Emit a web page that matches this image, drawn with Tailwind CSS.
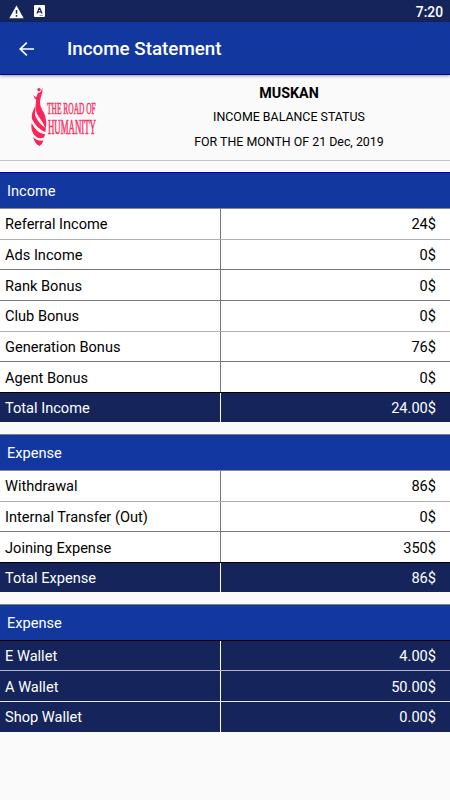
<!DOCTYPE html>
<html lang="en">
<head>
  <meta charset="UTF-8" />
  <meta name="viewport" content="width=device-width, initial-scale=1.0"/>
  <title>Income Statement</title>
  <script src="https://cdn.jsdelivr.net/npm/@tailwindcss/browser@4"></script>
</head>
<body class="bg-[#fafafa] h-[800px] overflow-hidden text-black font-[Roboto,sans-serif]">
  <!-- Status bar -->
  <div class="h-[22px] bg-[#15255b] flex items-center pl-[9px] pr-[7px] text-white">
    <svg class="w-[15px] h-[14px] mt-px" viewBox="0 0 15 14">
      <path d="M7.5 0.5L14.7 13.3H0.3Z" fill="#fff"/>
      <path d="M7.5 5V8.8M7.5 10V11.7" stroke="#15255b" stroke-width="1.5"/>
    </svg>
    <svg class="w-[11px] h-[12px] ml-[10px]" viewBox="0 0 11 12">
      <rect width="11" height="12" rx="1" fill="#fff"/>
      <path d="M3 8.5L5.2 3.2H5.8L8 8.5M3.8 6.9H7.2" fill="none" stroke="#15255b" stroke-width="1.2"/>
      <path d="M5.5 10.4H9" stroke="#15255b" stroke-width="0.5"/>
    </svg>
    <span class="ml-auto text-[13.8px] font-medium leading-[22px] pt-[1px]">7:20</span>
  </div>

  <!-- App bar -->
  <div class="h-[53px] bg-[#1238a0] border-b border-[#00009c] flex items-center shadow-[0_1px_3px_rgba(0,0,0,0.4)] relative text-white">
    <svg class="w-[15px] h-[14px] ml-[19px] mt-px" viewBox="0 0 15 14">
      <path d="M15 7H1.2M7.8 0.6L1.2 7L7.8 13.4" fill="none" stroke="#fff" stroke-width="1.7"/>
    </svg>
    <h1 class="ml-[33px] text-[18.8px] font-medium pt-[2px]">Income Statement</h1>
  </div>

  <!-- Company and month -->
  <div class="h-[86px] flex border-b border-[#c4c4c4]">
    <div class="w-[128px] pl-[30px] pt-[11px]">
      <svg class="w-[80px] h-[64px] overflow-visible" viewBox="0 0 80 64">
        <circle cx="9" cy="3.6" r="1.7" fill="#fb2358"/>
        <path d="M3.3 9L6 11.5L8 7L10.4 6.2L12.5 1.8L12.3 6.5Q10.5 11 10 16Q10 21 14 27Q17.5 35 15.6 43Q13 36 9 31Q4 25 6.2 14Q4 12 3.3 9Z" fill="#fb2358"/>
        <path d="M5.4 20Q1 27 2 33Q7 43 15.3 46Q16.5 43 15.3 42Q8 37 5 29Z" fill="#fb2358"/>
        <path d="M1.7 37Q0.5 43 3.5 48Q8 54 14 51.5L15.2 48.5Q6 47 1.7 37Z" fill="#fb2358"/>
        <path d="M3 51Q5 58 9.5 60Q12.5 58.5 13.4 54.5Q7 55.5 3 51Z" fill="#fb2358"/>
        <text transform="translate(17 27.8) scale(0.425 1)" font-family="Liberation Serif, serif" font-size="17.5" fill="#f73365" stroke="#f73365" stroke-width="0.6">THE ROAD OF</text>
        <text transform="translate(18 48) scale(0.41 1)" font-family="Liberation Serif, serif" font-size="21.5" fill="#f73365" stroke="#f73365" stroke-width="0.7">HUMANITY</text>
      </svg>
    </div>
    <div class="flex-1 text-center pt-[6px]">
      <p class="text-[14.3px] font-bold leading-6">MUSKAN</p>
      <p class="text-[12.4px] leading-6">INCOME BALANCE STATUS</p>
      <p class="text-[12.4px] leading-[25px]">FOR THE MONTH OF 21 Dec, 2019</p>
    </div>
  </div>

  <div class="text-[14.6px] leading-[31px]">
    <!-- Income -->
    <section class="mt-[11px]">
      <h2 class="h-[36px] bg-[#1238a0] border-t border-[#00009c] text-white pl-[7px] leading-[37px]">Income</h2>
      <div class="h-[31px] flex bg-white border-t border-[#8a8a8a]"><span class="w-[221px] h-[30px] pl-[5px] border-r border-[#777]">Referral Income</span><span class="flex-1 text-right pr-[14px]">24$</span></div>
      <div class="h-[30px] flex bg-white border-t border-[#b0b0b0]"><span class="w-[221px] h-[29px] pl-[5px] border-r border-[#777]">Ads Income</span><span class="flex-1 text-right pr-[14px]">0$</span></div>
      <div class="h-[31px] flex bg-white border-t border-[#777] leading-[33px]"><span class="w-[221px] h-[30px] pl-[5px] border-r border-[#777]">Rank Bonus</span><span class="flex-1 text-right pr-[14px]">0$</span></div>
      <div class="h-[31px] flex bg-white border-t border-[#777]"><span class="w-[221px] h-[30px] pl-[5px] border-r border-[#777]">Club Bonus</span><span class="flex-1 text-right pr-[14px]">0$</span></div>
      <div class="h-[30px] flex bg-white border-t border-[#b0b0b0]"><span class="w-[221px] h-[29px] pl-[5px] border-r border-[#777]">Generation Bonus</span><span class="flex-1 text-right pr-[14px]">76$</span></div>
      <div class="h-[31px] flex bg-white border-t border-[#777] leading-[33px]"><span class="w-[221px] h-[30px] pl-[5px] border-r border-[#777]">Agent Bonus</span><span class="flex-1 text-right pr-[14px]">0$</span></div>
      <div class="h-[30px] flex bg-[#15255b] border-t border-black text-white"><span class="w-[221px] h-[29px] pl-[5px] border-r border-white">Total Income</span><span class="flex-1 text-right pr-[14px]">24.00$</span></div>
    </section>

    <!-- Expense -->
    <section class="mt-[12px]">
      <h2 class="h-[36px] bg-[#1238a0] border-t border-[#808080] text-white pl-[7px] leading-[37px]">Expense</h2>
      <div class="h-[31px] flex bg-white border-t border-[#8a8a8a]"><span class="w-[221px] h-[30px] pl-[5px] border-r border-[#777]">Withdrawal</span><span class="flex-1 text-right pr-[14px]">86$</span></div>
      <div class="h-[30px] flex bg-white border-t border-[#b0b0b0]"><span class="w-[221px] h-[29px] pl-[5px] border-r border-[#777]">Internal Transfer (Out)</span><span class="flex-1 text-right pr-[14px]">0$</span></div>
      <div class="h-[31px] flex bg-white border-t border-[#777] leading-[33px]"><span class="w-[221px] h-[30px] pl-[5px] border-r border-[#777]">Joining Expense</span><span class="flex-1 text-right pr-[14px]">350$</span></div>
      <div class="h-[30px] flex bg-[#15255b] border-t border-black text-white"><span class="w-[221px] h-[29px] pl-[5px] border-r border-white">Total Expense</span><span class="flex-1 text-right pr-[14px]">86$</span></div>
    </section>

    <!-- Wallets -->
    <section class="mt-[12px] text-white">
      <h2 class="h-[36px] bg-[#1238a0] border-t border-[#808080] pl-[7px] leading-[37px]">Expense</h2>
      <div class="h-[30px] flex bg-[#15255b] border-t border-black"><span class="w-[221px] h-[29px] pl-[5px] border-r border-white">E Wallet</span><span class="flex-1 text-right pr-[14px]">4.00$</span></div>
      <div class="h-[31px] flex bg-[#15255b] border-t border-[#b5b5c0] leading-[33px]"><span class="w-[221px] h-[30px] pl-[5px] border-r border-white">A Wallet</span><span class="flex-1 text-right pr-[14px]">50.00$</span></div>
      <div class="h-[31px] flex bg-[#15255b] border-t border-[#e6e6f5]"><span class="w-[221px] h-[30px] pl-[5px] border-r border-white">Shop Wallet</span><span class="flex-1 text-right pr-[14px]">0.00$</span></div>
    </section>
  </div>
</body>
</html>
